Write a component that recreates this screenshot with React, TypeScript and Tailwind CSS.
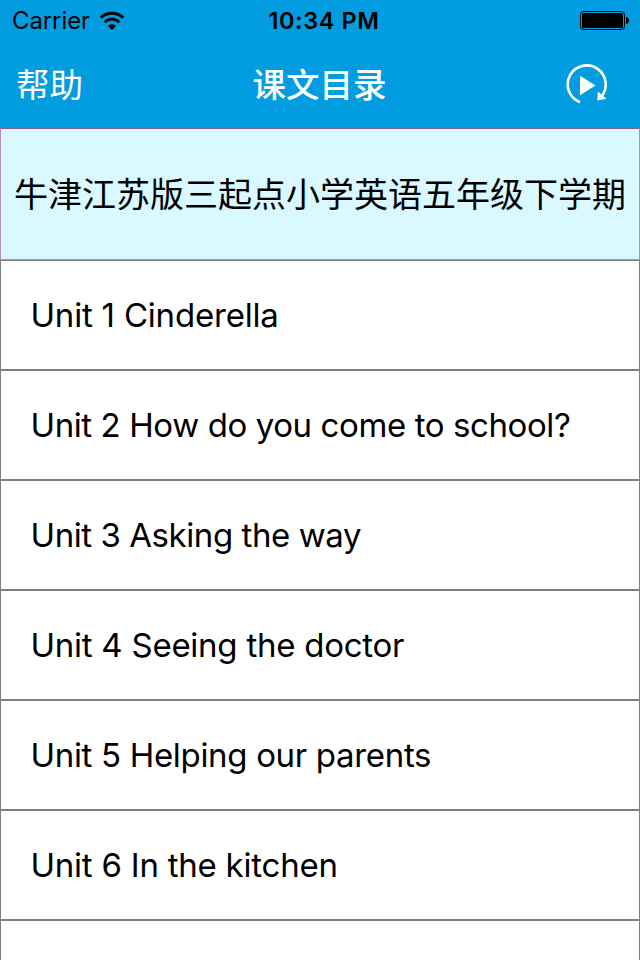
import React from 'react';

interface Unit {
  id: number;
  title: string;
  tracking: string;
}

const units: Unit[] = [
  { id: 1, title: 'Unit 1 Cinderella', tracking: 'tracking-[-0.2px]' },
  { id: 2, title: 'Unit 2 How do you come to school?', tracking: 'tracking-[-0.4px]' },
  { id: 3, title: 'Unit 3 Asking the way', tracking: 'tracking-[-0.43px]' },
  { id: 4, title: 'Unit 4 Seeing the doctor', tracking: 'tracking-[-0.25px]' },
  { id: 5, title: 'Unit 5 Helping our parents', tracking: 'tracking-[-0.32px]' },
  { id: 6, title: 'Unit 6 In the kitchen', tracking: 'tracking-[-0.23px]' },
];

function WifiIcon() {
  return (
    <svg width="26" height="20" viewBox="0 0 26 20" fill="none" stroke="#000" strokeWidth="2.800">
      <path d="M1.700 6.800C8 .7 18 .7 24.300 6.800" />
      <path d="M5.600 11.300C9.800 7.100 16.200 7.100 20.400 11.300" />
      <path d="M13 19L8.800 14.700C11.200 12.600 14.800 12.600 17.200 14.700Z" fill="#000" stroke="none" />
    </svg>
  );
}

function BatteryIcon() {
  return (
    <svg width="50" height="20" viewBox="0 0 50 20">
      <rect x="0.500" y="0.500" width="44" height="18" rx="3" fill="none" stroke="#000" />
      <rect x="2" y="2" width="41" height="15" rx="1.500" fill="#000" />
      <path d="M46 6C50 6.500 50 12.500 46 13Z" fill="#000" />
    </svg>
  );
}

function ReplayIcon() {
  return (
    <svg width="44" height="44" viewBox="0 0 44 44">
      <path d="M15 39.200A19 19 0 1 1 35.400 34.600" fill="none" stroke="#fff" strokeWidth="2.600" />
      <path d="M32.800 28.500L41.500 35.800L32.300 37.600Z" fill="#fff" />
      <path d="M15 12.700L30.500 22.400L15 32.300Z" fill="#fff" />
    </svg>
  );
}

function StatusBar() {
  return (
    <div className="grid h-10 grid-cols-3 items-center pt-[2px] pr-[10px] pl-[12px] text-black">
      <div className="flex items-center gap-[9px]">
        <span className="text-[24px] leading-[38px] tracking-[-0.1px]">Carrier</span>
        <WifiIcon />
      </div>
      <span className="pl-[6px] text-center text-[23.500px] leading-[38px] font-semibold tracking-[0.600px]">10:34 PM</span>
      <div className="flex justify-end">
        <BatteryIcon />
      </div>
    </div>
  );
}

function NavBar() {
  return (
    <div className="grid h-[88px] grid-cols-3 items-center pt-[2px] pr-[31px] pl-4 text-[33.500px] text-white">
      <button className="text-left">帮助</button>
      <h1 className="pl-[14px] text-center font-medium">课文目录</h1>
      <button className="flex justify-end">
        <ReplayIcon />
      </button>
    </div>
  );
}

export default function App() {
  return (
    <div className="h-[960px] w-[640px] overflow-hidden bg-white font-['Inter','Noto_Sans_CJK_SC',sans-serif]">
      <header className="bg-[#029ce0]">
        <StatusBar />
        <NavBar />
      </header>

      <h2 className="flex h-[132px] items-center justify-center border border-[#b18bc0] border-t-[#845f91] bg-[#d9f8ff] text-[34px] whitespace-nowrap text-black">
        牛津江苏版三起点小学英语五年级下学期
      </h2>

      <ul>
        {units.map((unit) => (
          <li
            key={unit.id}
            className={`flex h-[110px] items-center border border-[#808080] pt-[2px] pl-[29.500px] text-[33px] text-black ${unit.tracking}`}
          >
            {unit.title}
          </li>
        ))}
        {/* next row, still empty */}
        <li className="h-[110px] border border-[#808080]" />
      </ul>
    </div>
  );
}
